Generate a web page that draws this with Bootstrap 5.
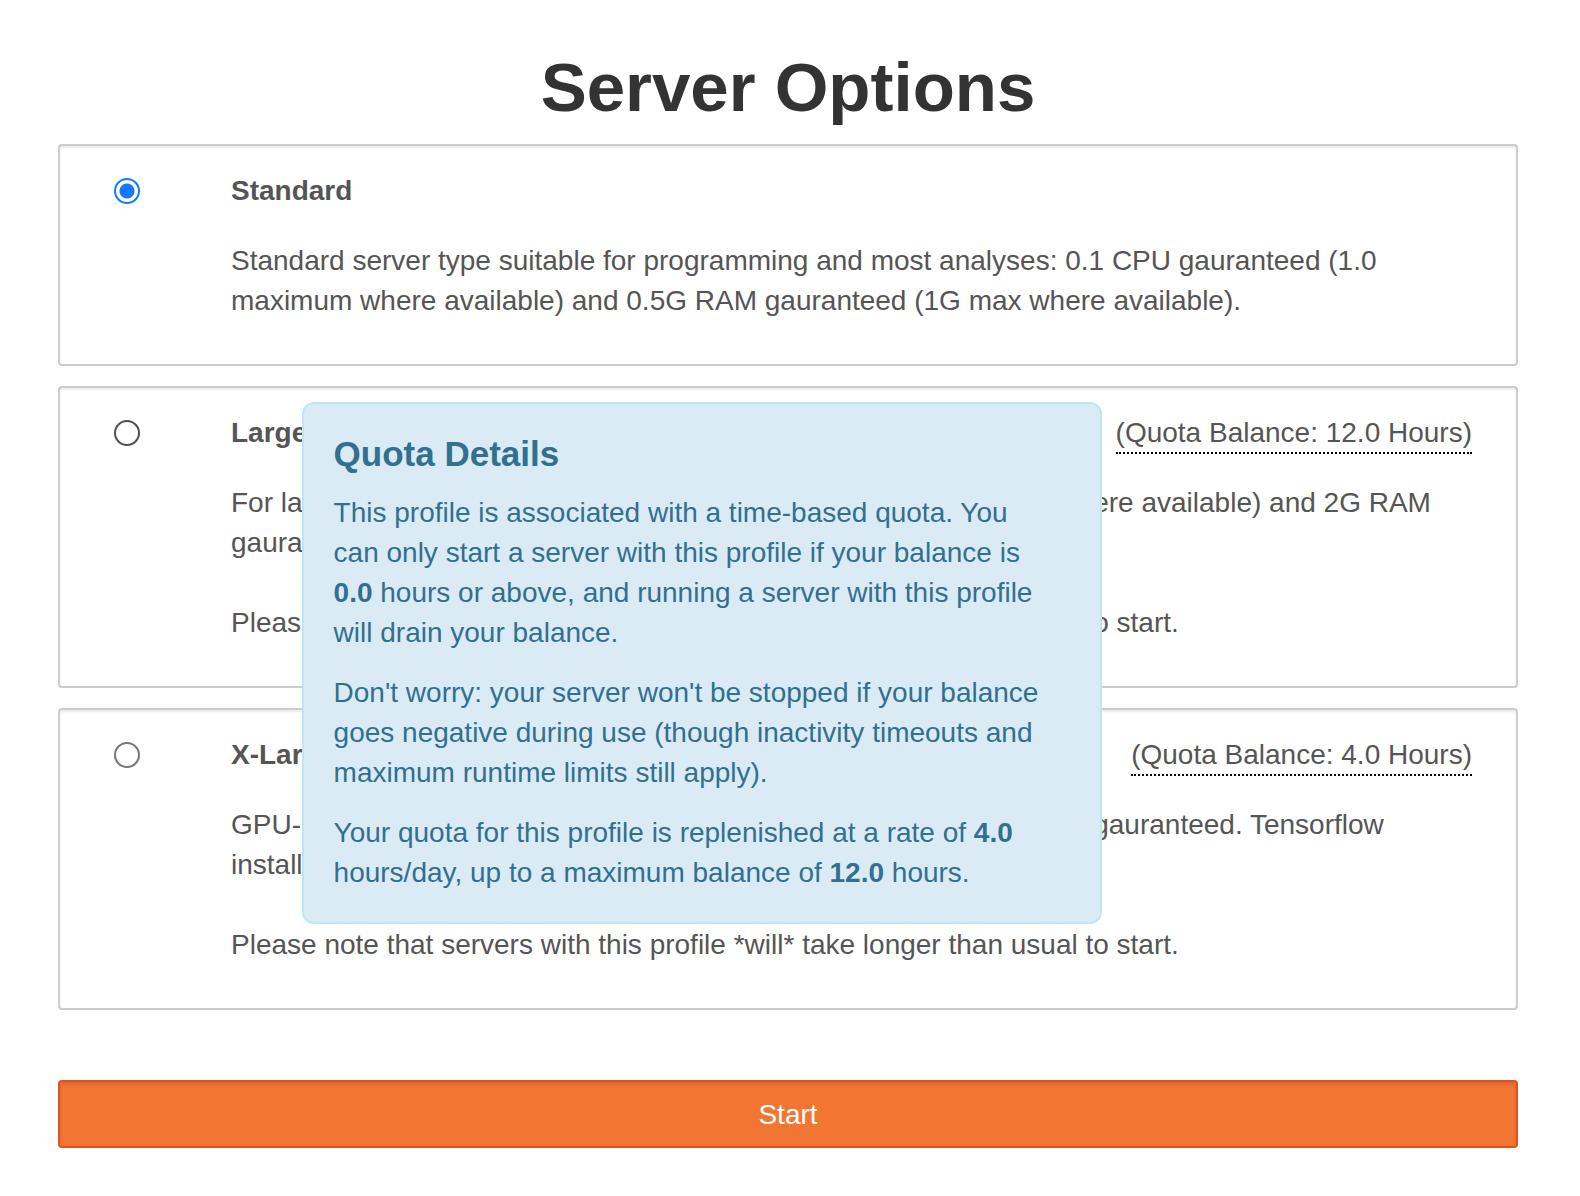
<!DOCTYPE html>
<html lang="en">
<head>
<meta charset="utf-8">
<meta name="viewport" content="width=device-width, initial-scale=1">
<title>Server Options</title>
<link href="https://cdn.jsdelivr.net/npm/bootstrap@5.3.0/dist/css/bootstrap.min.css" rel="stylesheet">
<style>
  body { font-family: "Liberation Sans", Arial, sans-serif; font-size: 28px; line-height: 40px; color: #333; background: #fff; }
  .page { padding: 48px 62px 48px 58px; }
  .page-title { font-size: 69px; line-height: 80px; font-weight: 700; margin-bottom: 16px; color: #333; }
  .profile-list { gap: 20px; margin-bottom: 70px; }
  .profile { color: #555; gap: 91px; padding: 25px 44px 43px 54px; border: 2px solid #ccc; border-radius: 4px; box-shadow: inset 0 2px 2px rgba(0,0,0,.075); }
  .profile-radio { appearance: none; width: 26px; height: 26px; margin: 7px 0 0; border: 2px solid #767676; border-radius: 50%; background: #fff; }
  .profile-radio.is-hovered { border-color: #4f4f4f; }
  .profile-radio:checked { border-color: #1479ff; background: radial-gradient(circle, #1479ff 7px, #fff 8px); }
  .profile-head { margin-bottom: 30px; }
  .profile p { margin: 0; }
  .profile p + p { margin-top: 40px; }
  .quota-label { display: block; height: 41px; margin-bottom: -1px; border-bottom: 2px dotted #000; }
  .quota-box { position: absolute; top: -11px; right: 100%; z-index: 10; width: 800px; margin-right: 14px; padding: 30px 46px 29px 30px; color: #31708f; background: #daebf5; border: 2px solid #bce8f1; border-radius: 12px; }
  .quota-box h2 { font-size: 35px; line-height: 40px; font-weight: 700; margin-bottom: 19px; }
  .profile .quota-box p + p { margin-top: 20px; }
  .btn-start { height: 68px; padding: 13px 12px 11px; font-size: 28px; line-height: 40px; color: #fff; background: #f27532; border: 2px solid #e34f21; border-radius: 4px; box-shadow: inset 0 2px 4px rgba(0,0,0,.125); }
  .btn-start:hover { color: #fff; background: #e86a26; border-color: #e34f21; }
</style>
</head>
<body>
<main class="page">
  <h1 class="page-title text-center">Server Options</h1>
  <form>
    <div class="profile-list d-flex flex-column">
      <div class="profile d-flex align-items-start">
        <input class="profile-radio flex-shrink-0" type="radio" name="profile" id="profile-standard" checked>
        <div class="flex-grow-1">
          <div class="profile-head"><label class="fw-bold" for="profile-standard">Standard</label></div>
          <p>Standard server type suitable for programming and most analyses: 0.1 CPU gauranteed (1.0 maximum where available) and 0.5G RAM gauranteed (1G max where available).</p>
        </div>
      </div>

      <div class="profile d-flex align-items-start">
        <input class="profile-radio is-hovered flex-shrink-0" type="radio" name="profile" id="profile-large">
        <div class="flex-grow-1">
          <div class="profile-head d-flex justify-content-between">
            <label class="fw-bold" for="profile-large">Large</label>
            <div class="position-relative">
              <span class="quota-label">(Quota Balance: 12.0 Hours)</span>
              <div class="quota-box" role="tooltip">
                <h2>Quota Details</h2>
                <p>This profile is associated with a time-based quota. You can only start a server with this profile if your balance is <b>0.0</b> hours or above, and running a server with this profile will drain your balance.</p>
                <p>Don't worry: your server won't be stopped if your balance goes negative during use (though inactivity timeouts and maximum runtime limits still apply).</p>
                <p>Your quota for this profile is replenished at a rate of <b>4.0</b> hours/day, up to a maximum balance of <b>12.0</b> hours.</p>
              </div>
            </div>
          </div>
          <p>For larger workloads and data sets: 1.0 CPU gauranteed (2.0 max where available) and 2G RAM<br>gauranteed (4G max where available).</p>
          <p>Please note that servers with this profile *will* take longer than usual to start.</p>
        </div>
      </div>

      <div class="profile d-flex align-items-start">
        <input class="profile-radio flex-shrink-0" type="radio" name="profile" id="profile-xlarge">
        <div class="flex-grow-1">
          <div class="profile-head d-flex justify-content-between">
            <label class="fw-bold" for="profile-xlarge">X-Large</label>
            <span class="quota-label">(Quota Balance: 4.0 Hours)</span>
          </div>
          <p>GPU-enabled server type for deep learning: 2.0 CPUs and 16G RAM gauranteed. Tensorflow<br>installed.</p>
          <p>Please note that servers with this profile *will* take longer than usual to start.</p>
        </div>
      </div>
    </div>
    <button type="button" class="btn btn-start w-100">Start</button>
  </form>
</main>
<script src="https://cdn.jsdelivr.net/npm/bootstrap@5.3.0/dist/js/bootstrap.bundle.min.js"></script>
</body>
</html>
